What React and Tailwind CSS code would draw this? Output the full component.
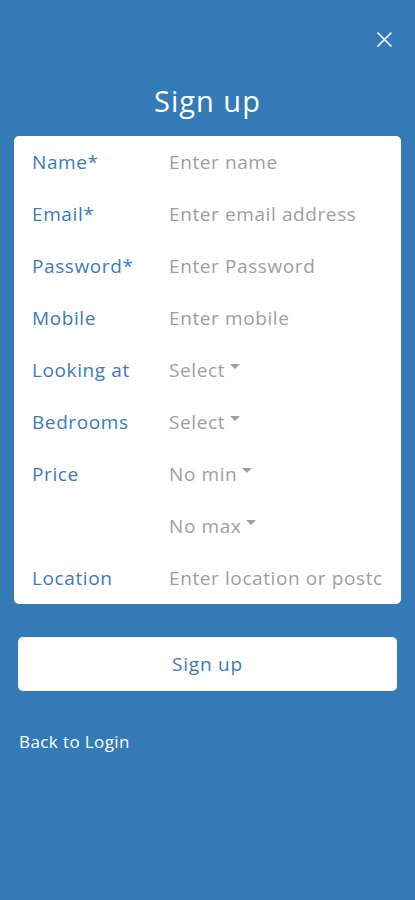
import React from "react";

const font = { fontFamily: '"Open Sans", "Liberation Sans", sans-serif' };

function Caret() {
  return (
    <svg width="10" height="6" viewBox="0 0 10 6" className="ml-[5px] mb-[6px] inline-block">
      <path d="M0 0 L10 0 L5 5 Z" fill="#9e9e9e" />
    </svg>
  );
}

function Row({ label, children }) {
  return (
    <div className="flex items-center h-[52px] text-[19px] tracking-[0.6px]">
      <div className="w-[137px] shrink-0 text-[#3c7ab8]">{label}</div>
      <div className="flex-1 min-w-0 overflow-hidden whitespace-nowrap text-[#9e9e9e]">
        {children}
      </div>
    </div>
  );
}

export default function App() {
  return (
    <div className="min-h-[900px] w-full bg-[#337ab7] flex flex-col" style={font}>
      <div className="flex justify-end pt-[32px] pr-[23px] h-[60px]">
        <svg width="15" height="15" viewBox="0 0 15 15">
          <path d="M1 1 L14 14 M14 1 L1 14" stroke="#ffffff" strokeWidth="1.6" strokeLinecap="round" />
        </svg>
      </div>
      <h1 className="text-center text-white text-[29px] tracking-[1px] mt-[22px] leading-[38px]">Sign up</h1>
      <div className="mx-[14px] mt-[16px] bg-white rounded-[5px] pl-[18px] pr-[19px]">
        <Row label="Name*">Enter name</Row>
        <Row label="Email*">Enter email address</Row>
        <Row label="Password*">Enter Password</Row>
        <Row label="Mobile">Enter mobile</Row>
        <Row label="Looking at">
          <span className="inline-flex items-center">Select<Caret /></span>
        </Row>
        <Row label="Bedrooms">
          <span className="inline-flex items-center">Select<Caret /></span>
        </Row>
        <Row label="Price">
          <span className="inline-flex items-center">No min<Caret /></span>
        </Row>
        <Row label="">
          <span className="inline-flex items-center">No max<Caret /></span>
        </Row>
        <Row label="Location">Enter location or postcode</Row>
      </div>
      <button className="mx-[18px] mt-[33px] h-[54px] bg-white rounded-[5px] text-[19px] tracking-[0.8px] text-[#3c7ab8]">
        Sign up
      </button>
      <div className="mt-[38px] ml-[19px] text-white text-[17px] tracking-[0.4px]">Back to Login</div>
    </div>
  );
}
